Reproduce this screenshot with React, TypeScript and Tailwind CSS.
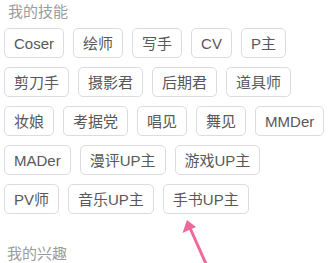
import React from "react";

const rows: string[][] = [
  ["Coser", "绘师", "写手", "CV", "P主"],
  ["剪刀手", "摄影君", "后期君", "道具师"],
  ["妆娘", "考据党", "唱见", "舞见", "MMDer"],
  ["MADer", "漫评UP主", "游戏UP主"],
  ["PV师", "音乐UP主", "手书UP主"],
];

const font = { fontFamily: '"Liberation Sans", "Noto Sans CJK SC", sans-serif' };

export default function App() {
  return (
    <div className="relative w-[336px] h-[263px] overflow-hidden bg-white" style={font}>
      <div className="pt-[1px] pl-[8px] text-[15px] leading-[21px] text-[#9b9b9b]">我的技能</div>
      <div className="mt-[6px] pl-[4px] flex flex-col gap-y-[9px]">
        {rows.map((row, i) => (
          <div key={i} className="flex gap-x-[9px]">
            {row.map((t) => (
              <div
                key={t}
                className="h-[30px] flex items-center px-[9px] border border-[#dcdcdc] rounded-[5px] text-[15px] text-[#585858] leading-none"
              >
                {t}
              </div>
            ))}
          </div>
        ))}
      </div>
      <div className="mt-[29px] pl-[7px] text-[15px] leading-[21px] text-[#9b9b9b]">我的兴趣</div>
      <svg className="absolute left-0 top-0 pointer-events-none" width="336" height="263" viewBox="0 0 336 263">
        <line x1="207" y1="266" x2="190" y2="228" stroke="#f0699a" strokeWidth="3" strokeLinecap="round" />
        <polygon points="187,220 182.5,233 196,227" fill="#f0699a" />
      </svg>
    </div>
  );
}
